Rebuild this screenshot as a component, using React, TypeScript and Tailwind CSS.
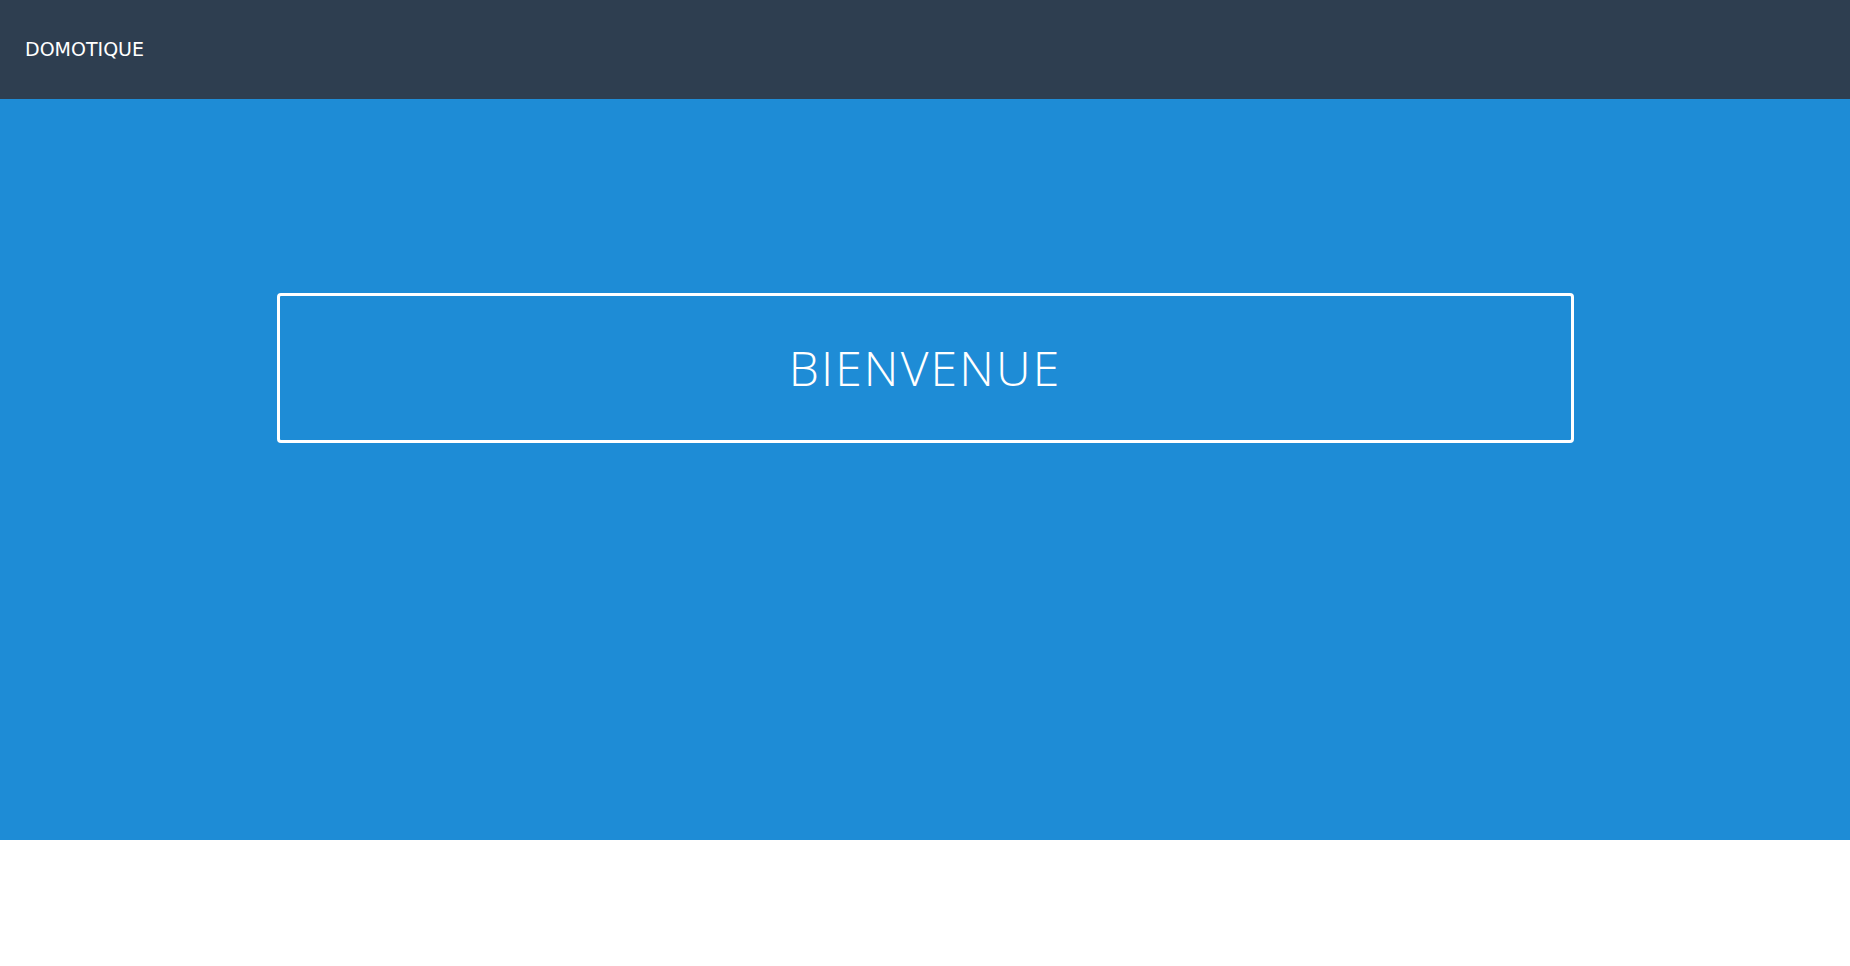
export default function App() {
  return (
    <div className="flex flex-col min-h-screen bg-white">
      {/* Top bar */}
      <header className="h-[99px] flex items-center px-[25px] bg-[#2e3e50]">
        <span className="text-[19px] text-white" style={{ fontFamily: '"DejaVu Sans", sans-serif' }}>
          DOMOTIQUE
        </span>
      </header>

      {/* Hero */}
      <section className="h-[741px] bg-[#1e8cd6] pt-[194px]">
        <div className="mx-auto w-[1297px] h-[150px] rounded-[4px] border-[3px] border-white flex items-center justify-center">
          <h1
            className="text-[48px] font-light text-white tracking-[0.045em]"
            style={{ fontFamily: '"Open Sans", sans-serif' }}
          >
            BIENVENUE
          </h1>
        </div>
      </section>
    </div>
  )
}
